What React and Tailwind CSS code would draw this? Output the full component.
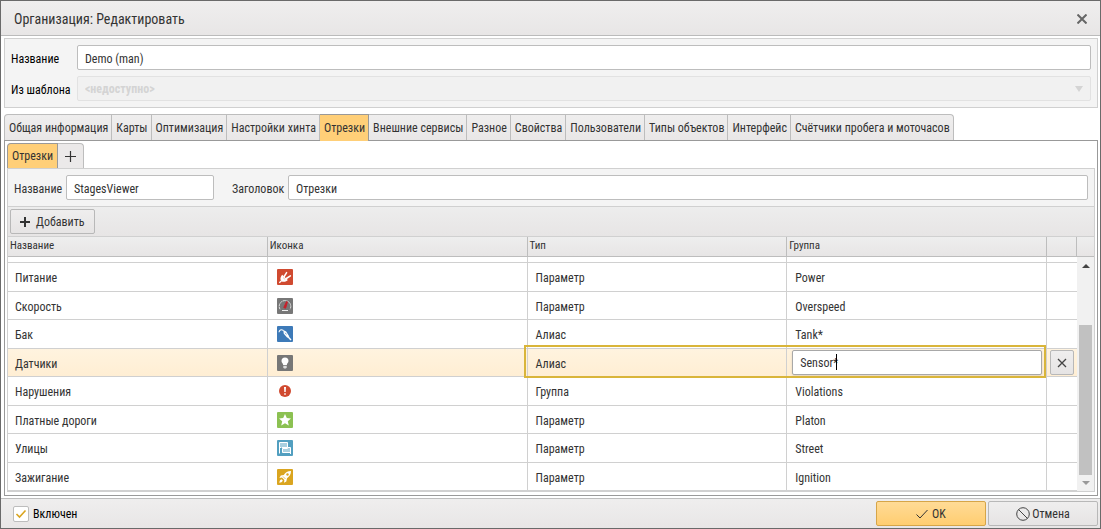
import React, { useState } from 'react';

const tabs = [
    'Общая информация',
    'Карты',
    'Оптимизация',
    'Настройки хинта',
    'Отрезки',
    'Внешние сервисы',
    'Разное',
    'Свойства',
    'Пользователи',
    'Типы объектов',
    'Интерфейс',
    'Счётчики пробега и моточасов',
];

const PlugIcon = () => (
    <svg viewBox="0 0 16 16" className="block size-4">
        <rect width="16" height="16" rx="1" fill="#d04a30" />
        <path d="M2.300 13.700 4.500 11.800" stroke="#fff" strokeWidth="1.300" />
        <path d="M5.200 5.800 10.800 11C9.500 12.800 6 13.600 4.300 12 2.700 10.400 3.600 7.400 5.200 5.800Z" fill="#fff" />
        <path d="M6 8.500 8.200 10.500" stroke="#e9a598" strokeWidth="0.700" />
        <path d="M7.200 7.500 9.600 3.600M9.300 9.500 13.400 6.800" stroke="#fff" strokeWidth="1.500" strokeLinecap="round" />
    </svg>
);

const GaugeIcon = () => (
    <svg viewBox="0 0 16 16" className="block size-4">
        <rect width="16" height="16" rx="1" fill="#777" />
        <path d="M3 11.300A5.800 5.800 0 1 1 13 11.300" fill="none" stroke="#ddd" strokeWidth="1" strokeDasharray="2.800 0.500" />
        <path d="M5 12.500h6" stroke="#eee" strokeWidth="1" />
        <path d="M6.800 9.500 9.600 3.500 10.400 3.900 8.600 10.200Z" fill="#c8202a" stroke="#c8202a" strokeWidth="1" />
    </svg>
);

const NozzleIcon = () => (
    <svg viewBox="0 0 16 16" className="block size-4">
        <rect width="16" height="16" rx="1" fill="#3d7ab8" />
        <path d="M2 6.300C2.300 4 4 3 6.500 4.500" fill="none" stroke="#fff" strokeWidth="1.100" />
        <path d="M6.200 4 9.200 5.500 12.300 10.500 10.300 11.800 6.800 7.800Z" fill="#fff" />
        <path d="M8.200 6.800 9.400 8.400" stroke="#3d7ab8" strokeWidth="0.700" />
        <path d="M11 10.800 14 14" stroke="#fff" strokeWidth="1.400" />
    </svg>
);

const BulbIcon = () => (
    <svg viewBox="0 0 16 16" className="block size-4">
        <rect width="16" height="16" rx="1" fill="#777" />
        <path d="M8 2.500A3.500 3.500 0 0 0 4.500 6C4.500 7.800 6.200 8.500 6.200 10H9.800C9.800 8.500 11.500 7.800 11.500 6A3.500 3.500 0 0 0 8 2.500Z" fill="#fff" />
        <path d="M6.300 10.700h3.400v1.600L9 13.400H7l-.7-1.100z" fill="#ddd" />
    </svg>
);

const AlertIcon = () => (
    <svg viewBox="0 0 16 16" className="block size-4">
        <circle cx="8" cy="8" r="6" fill="#d04a30" />
        <path d="M7 4h2l-.3 5H7.300zM7.200 10.200h1.600v1.600H7.200z" fill="#fff" />
    </svg>
);

const StarIcon = () => (
    <svg viewBox="0 0 16 16" className="block size-4">
        <rect width="16" height="16" rx="1" fill="#8cc152" />
        <path d="M8 2 9.800 6 14 6.400 10.800 9.200 11.800 13.500 8 11.200 4.200 13.500 5.200 9.200 2 6.400 6.200 6Z" fill="#fff" />
    </svg>
);

const StreetIcon = () => (
    <svg viewBox="0 0 16 16" className="block size-4">
        <rect width="16" height="16" rx="1" fill="#529fc0" />
        <path d="M2.500 13.500V2.500H10.500V7.500H2.500" fill="#a9d0e0" stroke="#fff" strokeWidth="1" />
        <path d="M4.500 13V7.500" stroke="#529fc0" strokeWidth="1" />
        <path d="M13.500 14V7.500H10.500V8.500H5.500V12.500H13.500" fill="#a9d0e0" stroke="#fff" strokeWidth="1" />
    </svg>
);

const RocketIcon = () => (
    <svg viewBox="0 0 16 16" className="block size-4">
        <rect width="16" height="16" rx="1" fill="#daa520" />
        <path d="M14 2C10.500 2 8.500 3.500 6.800 6L3.800 6.500 2.400 9 5 8.600 7.400 11 7 13.800 9.300 12.400 10 9.200C12.500 7.500 14 5.500 14 2Z" fill="#fff" />
        <path d="M4.600 10.200C3 10.800 2.600 12 2.300 13.700 4 13.400 5.200 13 5.800 11.400Z" fill="#fff" />
        <path d="M6 7.500 8.500 10" stroke="#daa520" strokeWidth="0.700" />
        <circle cx="10.500" cy="5.500" r="1.200" fill="#daa520" />
    </svg>
);

const rows = [
    { name: 'Питание', icon: PlugIcon, type: 'Параметр', group: 'Power' },
    { name: 'Скорость', icon: GaugeIcon, type: 'Параметр', group: 'Overspeed' },
    { name: 'Бак', icon: NozzleIcon, type: 'Алиас', group: 'Tank*' },
    { name: 'Датчики', icon: BulbIcon, type: 'Алиас', group: 'Sensor*', editing: true },
    { name: 'Нарушения', icon: AlertIcon, type: 'Группа', group: 'Violations' },
    { name: 'Платные дороги', icon: StarIcon, type: 'Параметр', group: 'Platon' },
    { name: 'Улицы', icon: StreetIcon, type: 'Параметр', group: 'Street' },
    { name: 'Зажигание', icon: RocketIcon, type: 'Параметр', group: 'Ignition' },
];

const inputClass = 'h-[25px] rounded-xs border border-[#bdbdbd] bg-white px-[7px] pt-0.5 outline-none';
const buttonClass = 'flex items-center justify-center rounded-xs border border-[#b8b8b8] bg-linear-to-b from-[#efeeee] to-[#e6e4e4]';

const TabBar = ({ active, onSelect }) => (
    <div role="tablist" className="flex px-[3px]">
        {tabs.map((tab) => (
            <button
                key={tab}
                type="button"
                role="tab"
                aria-selected={tab === active}
                onClick={() => onSelect(tab)}
                className={`whitespace-nowrap border-t border-r pr-[3px] pl-1 first:rounded-tl-sm first:border-l last:rounded-tr-sm ${
                    tab === active
                        ? 'relative z-10 -mb-px h-[27px] border-[#999] bg-[#ffcf78]'
                        : 'h-[26px] border-[#bdbdbd] bg-linear-to-b from-[#efeeee] to-[#e9e7e7]'
                }`}
            >
                {tab}
            </button>
        ))}
    </div>
);

const StageRow = ({ row }) => {
    const [group, setGroup] = useState(row.group);
    const Icon = row.icon;
    const cell = 'border-r border-b border-[#d0d0d0] pt-0.5 pr-[7px] pl-2';
    return (
        <tr className={`odd:h-7 even:h-[29px] ${row.editing ? 'bg-linear-to-b from-[#fff3df] to-[#ffeed3]' : 'bg-white'}`}>
            <td className="border-r border-b border-[#d0d0d0] px-[7px] pt-0.5">{row.name}</td>
            <td className="border-r border-b border-[#d0d0d0] px-[9px]"><Icon /></td>
            <td className={`${cell} ${row.editing ? 'relative' : ''}`}>
                {row.type}
                {row.editing && (
                    <div className="pointer-events-none absolute -top-1 -bottom-0.5 -left-1 z-10 w-[calc(200%+5px)] border-2 border-[#d9b53a]" />
                )}
            </td>
            {row.editing ? (
                <td className="border-r border-b border-[#d0d0d0] pr-1 pl-[5px]">
                    <div className="relative">
                        <input
                            aria-label="Группа"
                            value={group}
                            onChange={(e) => setGroup(e.target.value)}
                            className="block h-[25px] w-full rounded-xs border border-[#a8a8a8] bg-white px-[7px] caret-transparent shadow-sm outline-none"
                        />
                        <span className="pointer-events-none absolute top-1 left-11 h-4 w-px bg-black" />
                    </div>
                </td>
            ) : (
                <td className={cell}>{row.group}</td>
            )}
            <td className="border-b border-[#d0d0d0] px-[3px]">
                {row.editing && (
                    <button type="button" aria-label="Удалить" className={`${buttonClass} h-[25px] w-6`}>
                        <svg viewBox="0 0 10 10" className="size-2.5 stroke-[#444]"><path d="M1 1 9 9M9 1 1 9" strokeWidth="1.300" /></svg>
                    </button>
                )}
            </td>
        </tr>
    );
};

const App = () => {
    const [active, setActive] = useState('Отрезки');
    const [name, setName] = useState('Demo (man)');
    const [viewer, setViewer] = useState('StagesViewer');
    const [title, setTitle] = useState('Отрезки');
    const [enabled, setEnabled] = useState(true);

    return (
        <div className="flex min-h-screen flex-col border border-[#6a6a6a] bg-white font-['Roboto_Condensed','Liberation_Sans_Narrow',Roboto,sans-serif] text-xs text-[#333]">
            {/* Title */}
            <header className="flex h-[35px] items-center justify-between border-b border-[#bbb] bg-linear-to-b from-[#efeeee] to-[#e8e6e6] px-[13px] pt-0.5">
                <h1 className="text-sm">Организация: Редактировать</h1>
                <button type="button" aria-label="Закрыть">
                    <svg viewBox="0 0 10 10" className="size-2.5 stroke-[#666]"><path d="M0.500 0.500 9.500 9.500M9.500 0.500 0.500 9.500" strokeWidth="2" /></svg>
                </button>
            </header>

            {/* Organization form */}
            <section className="mt-0.5 mr-0.5 mb-1.5 ml-[3px] flex flex-col gap-1.5 border border-[#d0d0d0] bg-[#f4f4f4] p-1.5 text-black">
                <div className="flex items-center">
                    <label htmlFor="org-name" className="w-[66px] pt-0.5">Название</label>
                    <input id="org-name" value={name} onChange={(e) => setName(e.target.value)} className={`${inputClass} flex-1 text-[#333]`} />
                </div>
                <div className="flex items-center">
                    <label htmlFor="org-template" className="w-[66px] pt-0.5">Из шаблона</label>
                    <div className="relative flex-1">
                        <select id="org-template" disabled className="block h-[25px] w-full appearance-none rounded-xs border border-[#e2e2e2] bg-[#f1f1f1] px-[7px] font-bold text-[#d4d4d4] opacity-100">
                            <option>&lt;недоступно&gt;</option>
                        </select>
                        <svg viewBox="0 0 8 6" className="pointer-events-none absolute top-2.5 right-2 h-1.5 w-2 fill-[#d4d4d4]"><path d="M0 0H8L4 6Z" /></svg>
                    </div>
                </div>
            </section>

            <TabBar active={active} onSelect={setActive} />

            <main className="mr-0.5 ml-[3px] flex flex-1 flex-col border border-[#999] px-0.5 pt-0.5 pb-[3px]">
                <div className="flex">
                    <button type="button" className="h-[25px] rounded-tl-sm border-t border-r border-l border-[#999] bg-[#ffcf78] px-1">Отрезки</button>
                    <button type="button" aria-label="Новый" className="flex h-[25px] w-[26px] items-center justify-center rounded-tr-sm border-t border-r border-[#bdbdbd] bg-[#ebe9e9]">
                        <svg viewBox="0 0 11 11" className="size-[11px] stroke-[#333]"><path d="M5.500 0V11M0 5.500H11" strokeWidth="1.200" /></svg>
                    </button>
                </div>
                <div className="flex flex-1 flex-col border border-[#d0d0d0]">
                    <div className="flex items-center bg-[#f4f4f4] px-1.5 py-1.5">
                        <label htmlFor="viewer" className="w-[52px] pt-0.5">Название</label>
                        <input id="viewer" value={viewer} onChange={(e) => setViewer(e.target.value)} className={`${inputClass} w-37`} />
                        <label htmlFor="caption" className="ml-[18px] w-14 pt-0.5">Заголовок</label>
                        <input id="caption" value={title} onChange={(e) => setTitle(e.target.value)} className={`${inputClass} flex-1`} />
                    </div>
                    <div className="border-y border-[#d0d0d0] bg-linear-to-b from-[#ededed] to-[#e7e5e5] px-0.5 py-0.5">
                        <button type="button" className={`${buttonClass} h-[25px] gap-1.5 px-[9px]`}>
                            <svg viewBox="0 0 10 10" className="size-2.5 stroke-[#333]"><path d="M5 0V10M0 5H10" strokeWidth="2" /></svg>
                            Добавить
                        </button>
                    </div>

                    <div className="flex flex-1 items-stretch">
                        <div className="min-w-0 flex-1">
                            <table className="w-full table-fixed border-separate border-spacing-0">
                                <colgroup>
                                    <col /><col /><col /><col /><col className="w-[30px]" />
                                </colgroup>
                                <thead>
                                    <tr className="h-5 bg-linear-to-b from-[#eee] to-[#e7e5e5] text-left text-[11px]">
                                        {['Название', 'Иконка', 'Тип', 'Группа', ''].map((head) => (
                                            <th key={head} className="border-r border-b border-[#bdbdbd] px-0.5 font-normal">{head}</th>
                                        ))}
                                    </tr>
                                </thead>
                                <tbody>
                                    <tr className="h-1.5">
                                        {[0, 1, 2, 3].map((i) => <td key={i} className="border-r border-b border-[#d0d0d0]" />)}
                                        <td className="border-b border-[#d0d0d0]" />
                                    </tr>
                                    {rows.map((row) => <StageRow key={row.name} row={row} />)}
                                </tbody>
                            </table>
                        </div>
                        <div className="flex w-[17px] flex-col">
                            <div className="h-5 border-b border-[#bdbdbd] bg-linear-to-b from-[#eee] to-[#e7e5e5]" />
                            <div className="flex flex-1 flex-col items-center bg-[#f1f1f1] pt-[7px] pb-1.5">
                                <svg viewBox="0 0 8 4" className="h-1 w-2 fill-[#444]"><path d="M0 4 4 0 8 4Z" /></svg>
                                <div className="mt-auto mb-1.5 h-[150px] w-[13px] bg-[#c1c1c1]" />
                                <svg viewBox="0 0 8 4" className="h-1 w-2 fill-[#999]"><path d="M0 0H8L4 4Z" /></svg>
                            </div>
                        </div>
                    </div>
                </div>
            </main>

            {/* Footer */}
            <footer className="mt-0.5 flex items-center justify-between border-t border-[#bdbdbd] bg-linear-to-b from-[#efeeee] to-[#e8e6e6] py-0.5 pr-0.5 pl-3 text-black">
                <label className="flex items-center gap-1">
                    <span className="relative block size-4">
                        <input type="checkbox" checked={enabled} onChange={(e) => setEnabled(e.target.checked)} className="block size-4 appearance-none rounded-xs border border-[#bdbdbd] bg-white" />
                        {enabled && (
                            <svg viewBox="0 0 16 16" className="pointer-events-none absolute inset-0 size-4 fill-none stroke-[#daa520]"><path d="M3.500 8 6.500 11 12.500 4.500" strokeWidth="1.600" /></svg>
                        )}
                    </span>
                    Включен
                </label>
                <div className="flex gap-0.5 text-[#333]">
                    <button type="button" className="flex h-[25px] w-[110px] items-center justify-center gap-1 rounded-xs border border-[#d6a548] bg-linear-to-b from-[#ffdb96] to-[#ffcd70]">
                        <svg viewBox="0 0 12 10" className="h-2.5 w-3 fill-none stroke-[#333]"><path d="M0.500 5.500 4 9 11.500 1" /></svg>
                        OK
                    </button>
                    <button type="button" className={`${buttonClass} h-[25px] w-[110px] gap-0.5`}>
                        <svg viewBox="0 0 14 14" className="size-3.5 fill-none stroke-[#444]"><circle cx="7" cy="7" r="6.300" /><path d="M2.500 2.500 11.500 11.500" /></svg>
                        Отмена
                    </button>
                </div>
            </footer>
        </div>
    );
}

export default App;
